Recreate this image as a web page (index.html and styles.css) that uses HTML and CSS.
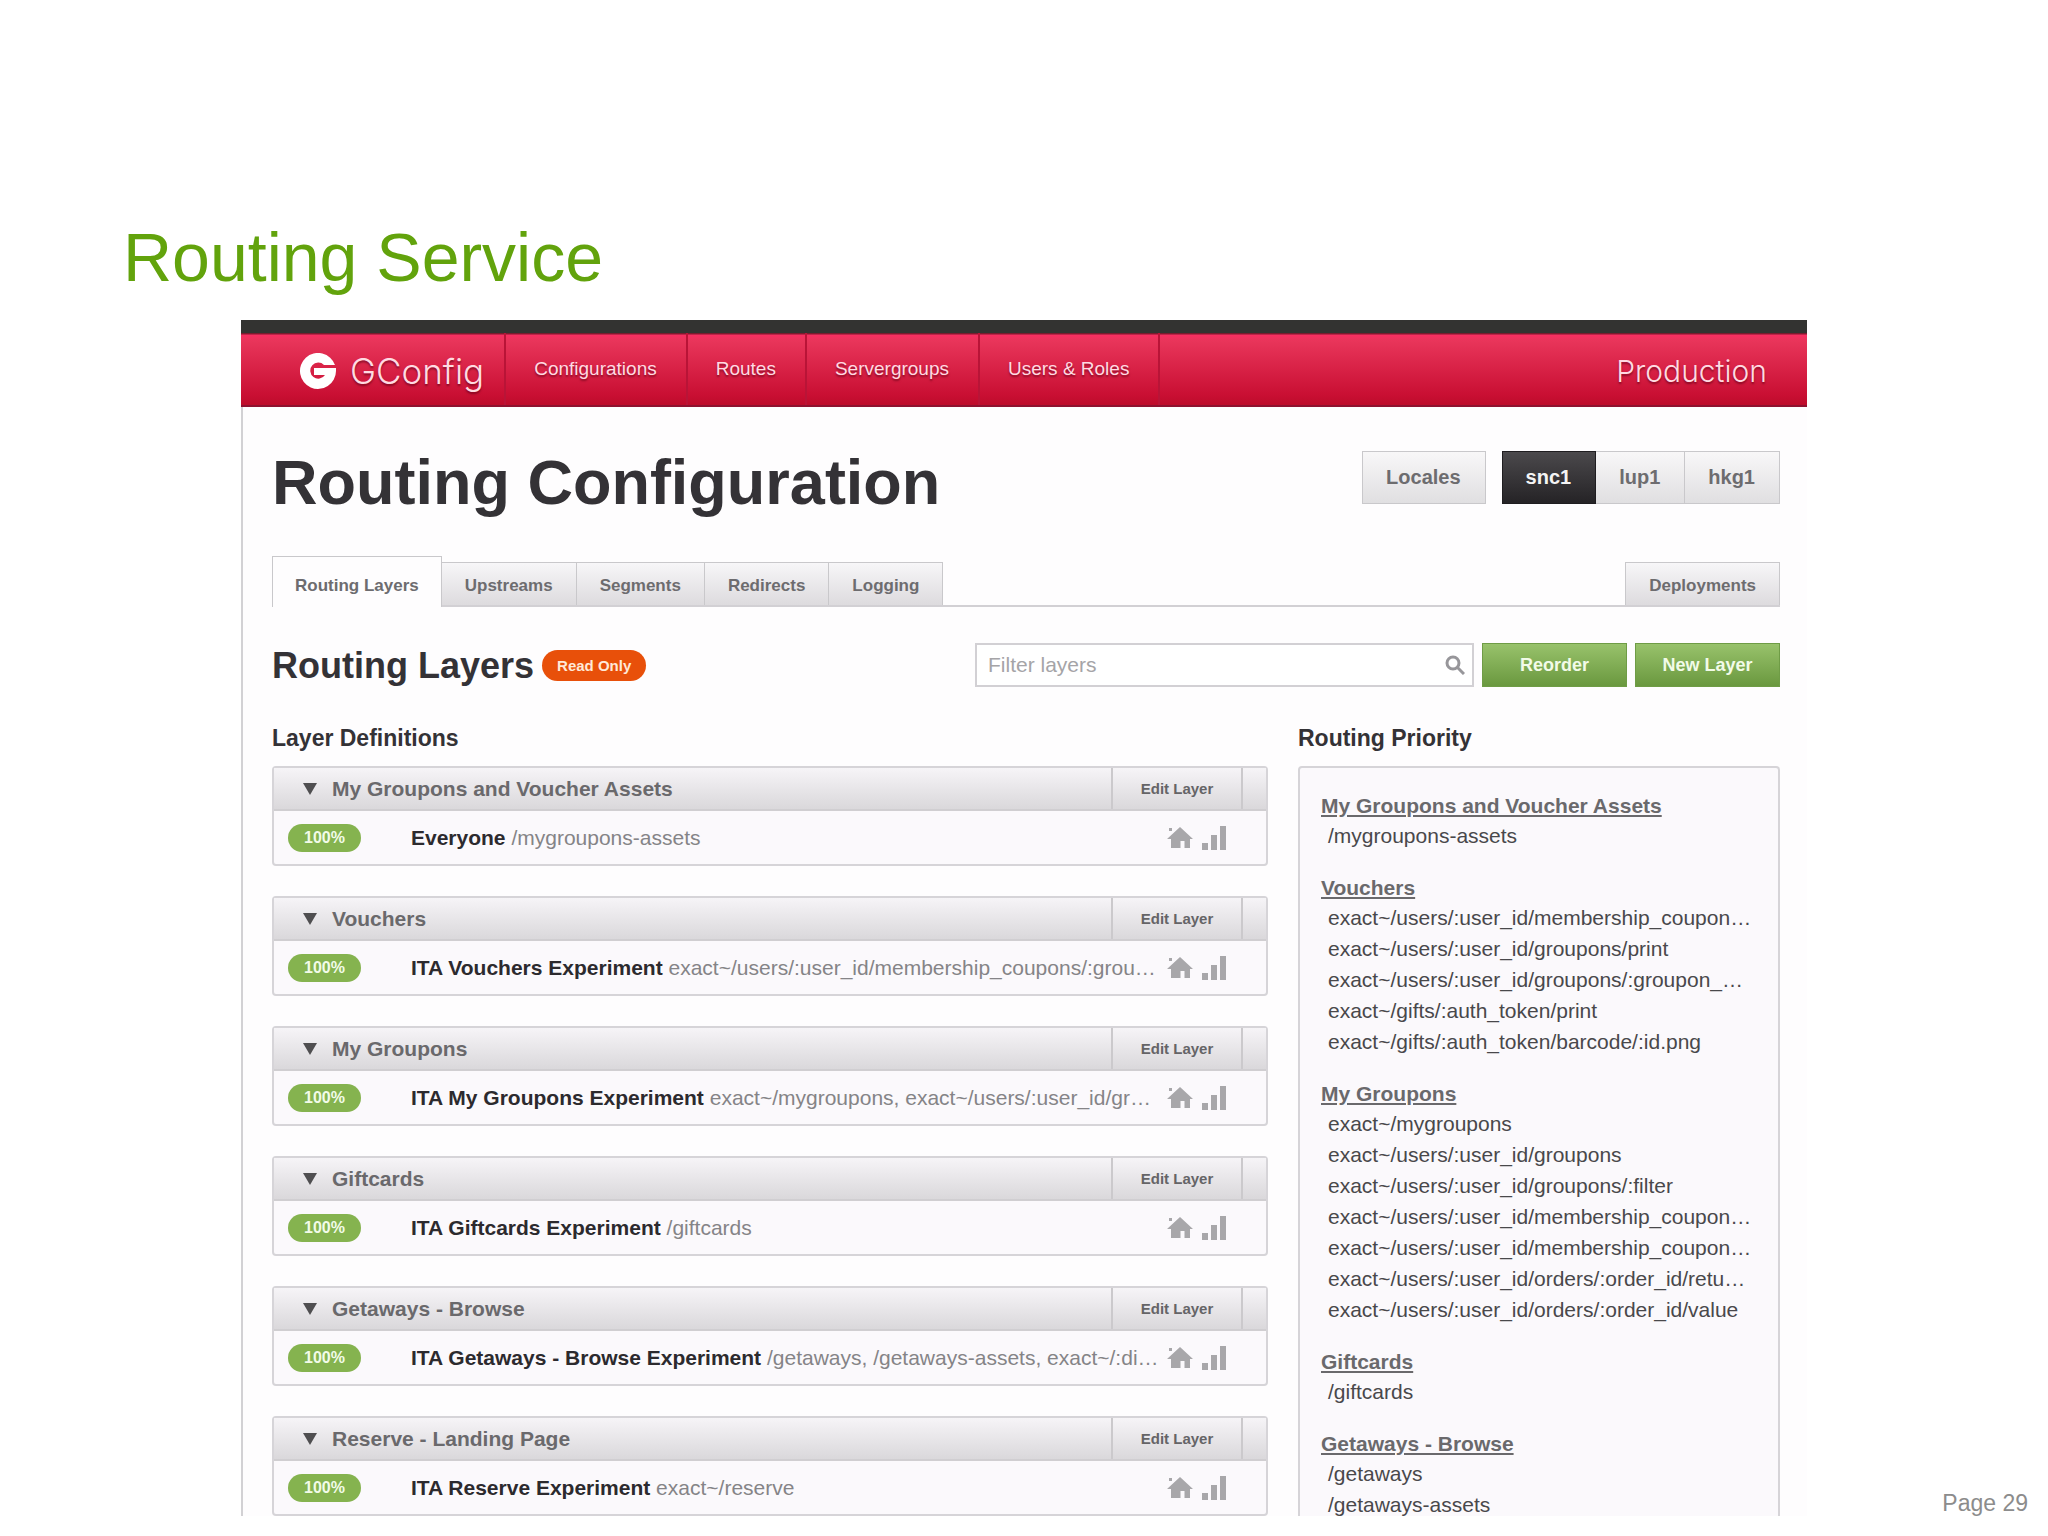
FILE: index.html
```html
<!DOCTYPE html>
<html lang="en">
<head>
  <meta charset="UTF-8">
  <title>Routing Service</title>
  <link rel="stylesheet" href="styles.css">
</head>
<body>
  <svg class="sprite" aria-hidden="true">
    <symbol id="icon-home" viewBox="0 0 26 24">
      <path d="M13 1 L26 13 H23 V22 H17.500 V15 H13.500 V22 H4 V13 H0 Z"/>
      <path d="M2 2 h3 v3 h-3 z"/>
    </symbol>
    <symbol id="icon-bars" viewBox="0 0 24 24">
      <path d="M0 17 h6 v7 h-6 z M9 9 h6 v15 h-6 z M18 0 h6 v24 h-6 z"/>
    </symbol>
  </svg>

  <div class="slide">
    <h1 class="slide-title">Routing Service</h1>

    <div class="app">
      <header class="topbar">
        <a class="brand" href="#">
          <svg class="logo" viewBox="0 0 36 36" aria-hidden="true">
            <path d="M35 12 A18 18 0 1 0 36 18 V15 H14 V22 H25 A8 8 0 1 1 24 12 Z"/>
          </svg>
          <span>GConfig</span>
        </a>
        <nav class="nav">
          <a href="#">Configurations</a>
          <a href="#">Routes</a>
          <a href="#">Servergroups</a>
          <a href="#">Users &amp; Roles</a>
        </nav>
        <span class="env">Production</span>
      </header>

      <main class="content">
        <div class="page-head">
          <h2>Routing Configuration</h2>
          <div class="switches">
            <button type="button" class="switch">Locales</button>
            <div class="switch-group">
              <button type="button" class="switch active">snc1</button>
              <button type="button" class="switch">lup1</button>
              <button type="button" class="switch">hkg1</button>
            </div>
          </div>
        </div>

        <nav class="tabs">
          <a class="tab active" href="#">Routing Layers</a>
          <a class="tab" href="#">Upstreams</a>
          <a class="tab" href="#">Segments</a>
          <a class="tab" href="#">Redirects</a>
          <a class="tab" href="#">Logging</a>
          <a class="tab deployments" href="#">Deployments</a>
        </nav>

        <div class="toolbar">
          <h3>Routing Layers</h3>
          <span class="read-only">Read Only</span>
          <div class="filter">
            <input type="text" placeholder="Filter layers" aria-label="Filter layers">
            <svg viewBox="0 0 20 20" aria-hidden="true">
              <circle cx="8" cy="8" r="6"/>
              <path d="M12 12 L19 19"/>
            </svg>
          </div>
          <button type="button" class="action">Reorder</button>
          <button type="button" class="action">New Layer</button>
        </div>

        <div class="columns">
          <section class="layers">
            <h4>Layer Definitions</h4>

            <article class="layer">
              <div class="layer-head">
                <span class="arrow"></span>
                <h5>My Groupons and Voucher Assets</h5>
                <button type="button">Edit Layer</button>
              </div>
              <div class="layer-row">
                <span class="percent">100%</span>
                <p><b>Everyone</b> /mygroupons-assets</p>
                <svg class="home"><use href="#icon-home"/></svg>
                <svg class="bars"><use href="#icon-bars"/></svg>
              </div>
            </article>

            <article class="layer">
              <div class="layer-head">
                <span class="arrow"></span>
                <h5>Vouchers</h5>
                <button type="button">Edit Layer</button>
              </div>
              <div class="layer-row">
                <span class="percent">100%</span>
                <p><b>ITA Vouchers Experiment</b> exact~/users/:user_id/membership_coupons/:grou…</p>
                <svg class="home"><use href="#icon-home"/></svg>
                <svg class="bars"><use href="#icon-bars"/></svg>
              </div>
            </article>

            <article class="layer">
              <div class="layer-head">
                <span class="arrow"></span>
                <h5>My Groupons</h5>
                <button type="button">Edit Layer</button>
              </div>
              <div class="layer-row">
                <span class="percent">100%</span>
                <p><b>ITA My Groupons Experiment</b> exact~/mygroupons, exact~/users/:user_id/gr…</p>
                <svg class="home"><use href="#icon-home"/></svg>
                <svg class="bars"><use href="#icon-bars"/></svg>
              </div>
            </article>

            <article class="layer">
              <div class="layer-head">
                <span class="arrow"></span>
                <h5>Giftcards</h5>
                <button type="button">Edit Layer</button>
              </div>
              <div class="layer-row">
                <span class="percent">100%</span>
                <p><b>ITA Giftcards Experiment</b> /giftcards</p>
                <svg class="home"><use href="#icon-home"/></svg>
                <svg class="bars"><use href="#icon-bars"/></svg>
              </div>
            </article>

            <article class="layer">
              <div class="layer-head">
                <span class="arrow"></span>
                <h5>Getaways - Browse</h5>
                <button type="button">Edit Layer</button>
              </div>
              <div class="layer-row">
                <span class="percent">100%</span>
                <p><b>ITA Getaways - Browse Experiment</b> /getaways, /getaways-assets, exact~/:di…</p>
                <svg class="home"><use href="#icon-home"/></svg>
                <svg class="bars"><use href="#icon-bars"/></svg>
              </div>
            </article>

            <article class="layer">
              <div class="layer-head">
                <span class="arrow"></span>
                <h5>Reserve - Landing Page</h5>
                <button type="button">Edit Layer</button>
              </div>
              <div class="layer-row">
                <span class="percent">100%</span>
                <p><b>ITA Reserve Experiment</b> exact~/reserve</p>
                <svg class="home"><use href="#icon-home"/></svg>
                <svg class="bars"><use href="#icon-bars"/></svg>
              </div>
            </article>
          </section>

          <section class="priority">
            <h4>Routing Priority</h4>
            <div class="priority-box">
              <a href="#">My Groupons and Voucher Assets</a>
              <ul>
                <li>/mygroupons-assets</li>
              </ul>
              <a href="#">Vouchers</a>
              <ul>
                <li>exact~/users/:user_id/membership_coupon…</li>
                <li>exact~/users/:user_id/groupons/print</li>
                <li>exact~/users/:user_id/groupons/:groupon_…</li>
                <li>exact~/gifts/:auth_token/print</li>
                <li>exact~/gifts/:auth_token/barcode/:id.png</li>
              </ul>
              <a href="#">My Groupons</a>
              <ul>
                <li>exact~/mygroupons</li>
                <li>exact~/users/:user_id/groupons</li>
                <li>exact~/users/:user_id/groupons/:filter</li>
                <li>exact~/users/:user_id/membership_coupon…</li>
                <li>exact~/users/:user_id/membership_coupon…</li>
                <li>exact~/users/:user_id/orders/:order_id/retu…</li>
                <li>exact~/users/:user_id/orders/:order_id/value</li>
              </ul>
              <a href="#">Giftcards</a>
              <ul>
                <li>/giftcards</li>
              </ul>
              <a href="#">Getaways - Browse</a>
              <ul>
                <li>/getaways</li>
                <li>/getaways-assets</li>
              </ul>
            </div>
          </section>
        </div>
      </main>
    </div>

    <footer class="page-number">Page 29</footer>
  </div>
</body>
</html>
```
FILE: styles.css
```css
* {
  box-sizing: border-box;
}
body {
  margin: 0;
  background: #fff;
  color: #343236;
  font-family: "Liberation Sans", Arial, Helvetica, sans-serif;
  font-size: 21px;
}
h1, h2, h3, h4, h5, p, ul {
  margin: 0;
  padding: 0;
}
a {
  color: inherit;
  text-decoration: none;
}
button, input {
  margin: 0;
  font-family: inherit;
}
button {
  cursor: pointer;
}
.sprite {
  display: none;
}

/* slide */
.slide {
  display: grid;
  grid-template-columns: 241px minmax(0, 1fr) 241px;
  grid-template-rows: auto minmax(0, 1fr);
  height: 100vh;
  padding-bottom: 20px;
}
.slide-title {
  grid-column: 1 / -1;
  padding: 218px 0 24px 123px;
  color: #62a30c;
  font-size: 68px;
  font-weight: normal;
  line-height: 78px;
}
.app {
  grid-column: 2;
  display: flex;
  flex-direction: column;
  overflow: hidden;
}
.page-number {
  align-self: end;
  padding-right: 20px;
  color: #8c8c8c;
  font-size: 23px;
  line-height: 26px;
  text-align: right;
}

/* top bar */
.topbar {
  display: flex;
  flex-shrink: 0;
  height: 87px;
  padding: 0 40px 0 59px;
  border-top: 13px solid #333331;
  border-bottom: 2px solid #8e1230;
  background: linear-gradient(#7d1a2e 1px, #f92f62 2px, #e8355a 8px, #c90f33 62px, #bd0c2b);
  color: #ffdbe2;
  text-shadow: 0 2px 2px rgba(90, 0, 20, 0.6);
}
.brand, .env {
  display: flex;
  align-items: center;
  padding-top: 3px;
  font-family: Inter, Roboto, sans-serif;
  font-weight: 300;
}
.brand {
  gap: 14px;
  padding-right: 20px;
  font-size: 35px;
}
.logo {
  width: 36px;
  height: 36px;
  fill: #fff;
}
.nav {
  display: flex;
  border-left: 2px solid #b91437;
}
.nav a {
  padding: 0 29px 0 28px;
  border-right: 2px solid #b91437;
  font-size: 19px;
  line-height: 72px;
}
.env {
  margin-left: auto;
  font-size: 30px;
}

/* page header */
.content {
  flex: 1;
  min-height: 0;
  padding: 44px 27px 0 29px;
  border-left: 2px solid #d2d1d4;
  background: #fefdfe;
}
.page-head {
  display: flex;
  justify-content: space-between;
  align-items: flex-start;
  height: 105px;
}
h2 {
  font-size: 63px;
  line-height: 62px;
}
.switches, .switch-group {
  display: flex;
}
.switches {
  gap: 16px;
}
.switch {
  height: 53px;
  padding: 0 24px 0 23px;
  border: 1px solid #c9c8cb;
  background: linear-gradient(#f8f7f8, #e0dfe1);
  color: #6d6c6f;
  font-size: 20px;
  font-weight: bold;
}
.switch-group .switch + .switch {
  border-left: 0;
}
.switch.active {
  border-color: #1f1d20;
  background: linear-gradient(#4b494c, #252326);
  color: #f4f4f4;
}

/* tabs */
.tabs {
  display: flex;
  align-items: flex-end;
  height: 51px;
  border-bottom: 2px solid #d2d0d4;
}
.tab {
  height: 43px;
  padding: 0 23px;
  border: solid #c9c8cb;
  border-width: 1px 1px 0 0;
  background: linear-gradient(#f7f6f8, #dddbde);
  color: #6d6c6f;
  font-size: 17px;
  font-weight: bold;
  line-height: 46px;
}
.tab.active {
  height: 51px;
  margin-bottom: -2px;
  padding: 0 22px;
  border-left-width: 1px;
  background: #fefdfe;
  line-height: 58px;
}
.tab.deployments {
  margin-left: auto;
  border-left-width: 1px;
}

/* title, filter and actions */
.toolbar {
  display: flex;
  align-items: center;
  gap: 8px;
  padding: 36px 0 38px;
}
h3 {
  font-size: 36px;
  line-height: 43px;
}
.read-only {
  padding: 0 15px;
  border-radius: 16px;
  background: #e8500a;
  color: #ffe9d8;
  font-size: 15px;
  font-weight: bold;
  line-height: 31px;
}
.filter {
  position: relative;
  width: 499px;
  margin-left: auto;
}
.filter input {
  display: block;
  width: 100%;
  height: 44px;
  padding: 0 48px 0 11px;
  border: 2px solid #d2d0d4;
  background: #fff;
  color: #343236;
  font-size: 21px;
}
.filter input::placeholder {
  color: #a5a4a7;
}
.filter svg {
  position: absolute;
  top: 12px;
  right: 9px;
  width: 20px;
  height: 20px;
  fill: none;
  stroke: #97969a;
  stroke-width: 3;
}
.action {
  width: 145px;
  height: 44px;
  border: 1px solid #6f9c46;
  background: linear-gradient(#98c26b, #6a983f);
  color: #f2fbe8;
  font-size: 18px;
  font-weight: bold;
}

/* two columns */
.columns {
  display: grid;
  grid-template-columns: minmax(0, 1fr) 482px;
  gap: 30px;
}
h4 {
  margin-bottom: 15px;
  font-size: 23px;
  line-height: 26px;
}
.layer {
  margin-bottom: 30px;
  border: 2px solid #d6d4d8;
  border-radius: 4px;
  background: #fbf9fc;
}
.layer-head {
  display: flex;
  align-items: center;
  height: 43px;
  padding: 0 23px 0 29px;
  border-bottom: 2px solid #d0ced1;
  background: linear-gradient(#f6f4f7, #dad8db);
}
.arrow {
  border: solid transparent;
  border-width: 12px 7px 0;
  border-top-color: #4f4e50;
}
h5 {
  flex: 1;
  margin-left: 15px;
  color: #6a696c;
  font-size: 21px;
}
.layer-head button {
  align-self: stretch;
  width: 132px;
  padding: 0;
  border: solid #cbc9cc;
  border-width: 0 2px;
  background: none;
  color: #656467;
  font-size: 15px;
  font-weight: bold;
}
.layer-row {
  display: flex;
  align-items: center;
  height: 53px;
  padding: 0 40px 0 14px;
}
.layer-row p {
  flex: 1;
  min-width: 0;
  margin-left: 50px;
  color: #858487;
  white-space: nowrap;
}
.layer-row b {
  color: #2c2a2e;
}
.percent {
  width: 73px;
  border-radius: 14px;
  background: #85b34f;
  color: #f2fbe8;
  font-size: 16px;
  font-weight: bold;
  line-height: 28px;
  text-align: center;
}
.home, .bars {
  height: 24px;
  fill: #a8a7aa;
}
.home {
  width: 26px;
  margin-right: 9px;
}
.bars {
  width: 24px;
}

/* routing priority */
.priority-box {
  padding: 24px 20px 200px 21px;
  border: 2px solid #d6d4d8;
  border-radius: 4px;
  background: #fbf9fc;
}
.priority-box a {
  display: block;
  color: #6a696c;
  font-size: 21px;
  font-weight: bold;
  line-height: 28px;
  text-decoration: underline;
}
.priority-box ul {
  margin-bottom: 23px;
  padding-left: 7px;
  list-style: none;
}
.priority-box li {
  color: #49484b;
  line-height: 31px;
  white-space: nowrap;
}
```
